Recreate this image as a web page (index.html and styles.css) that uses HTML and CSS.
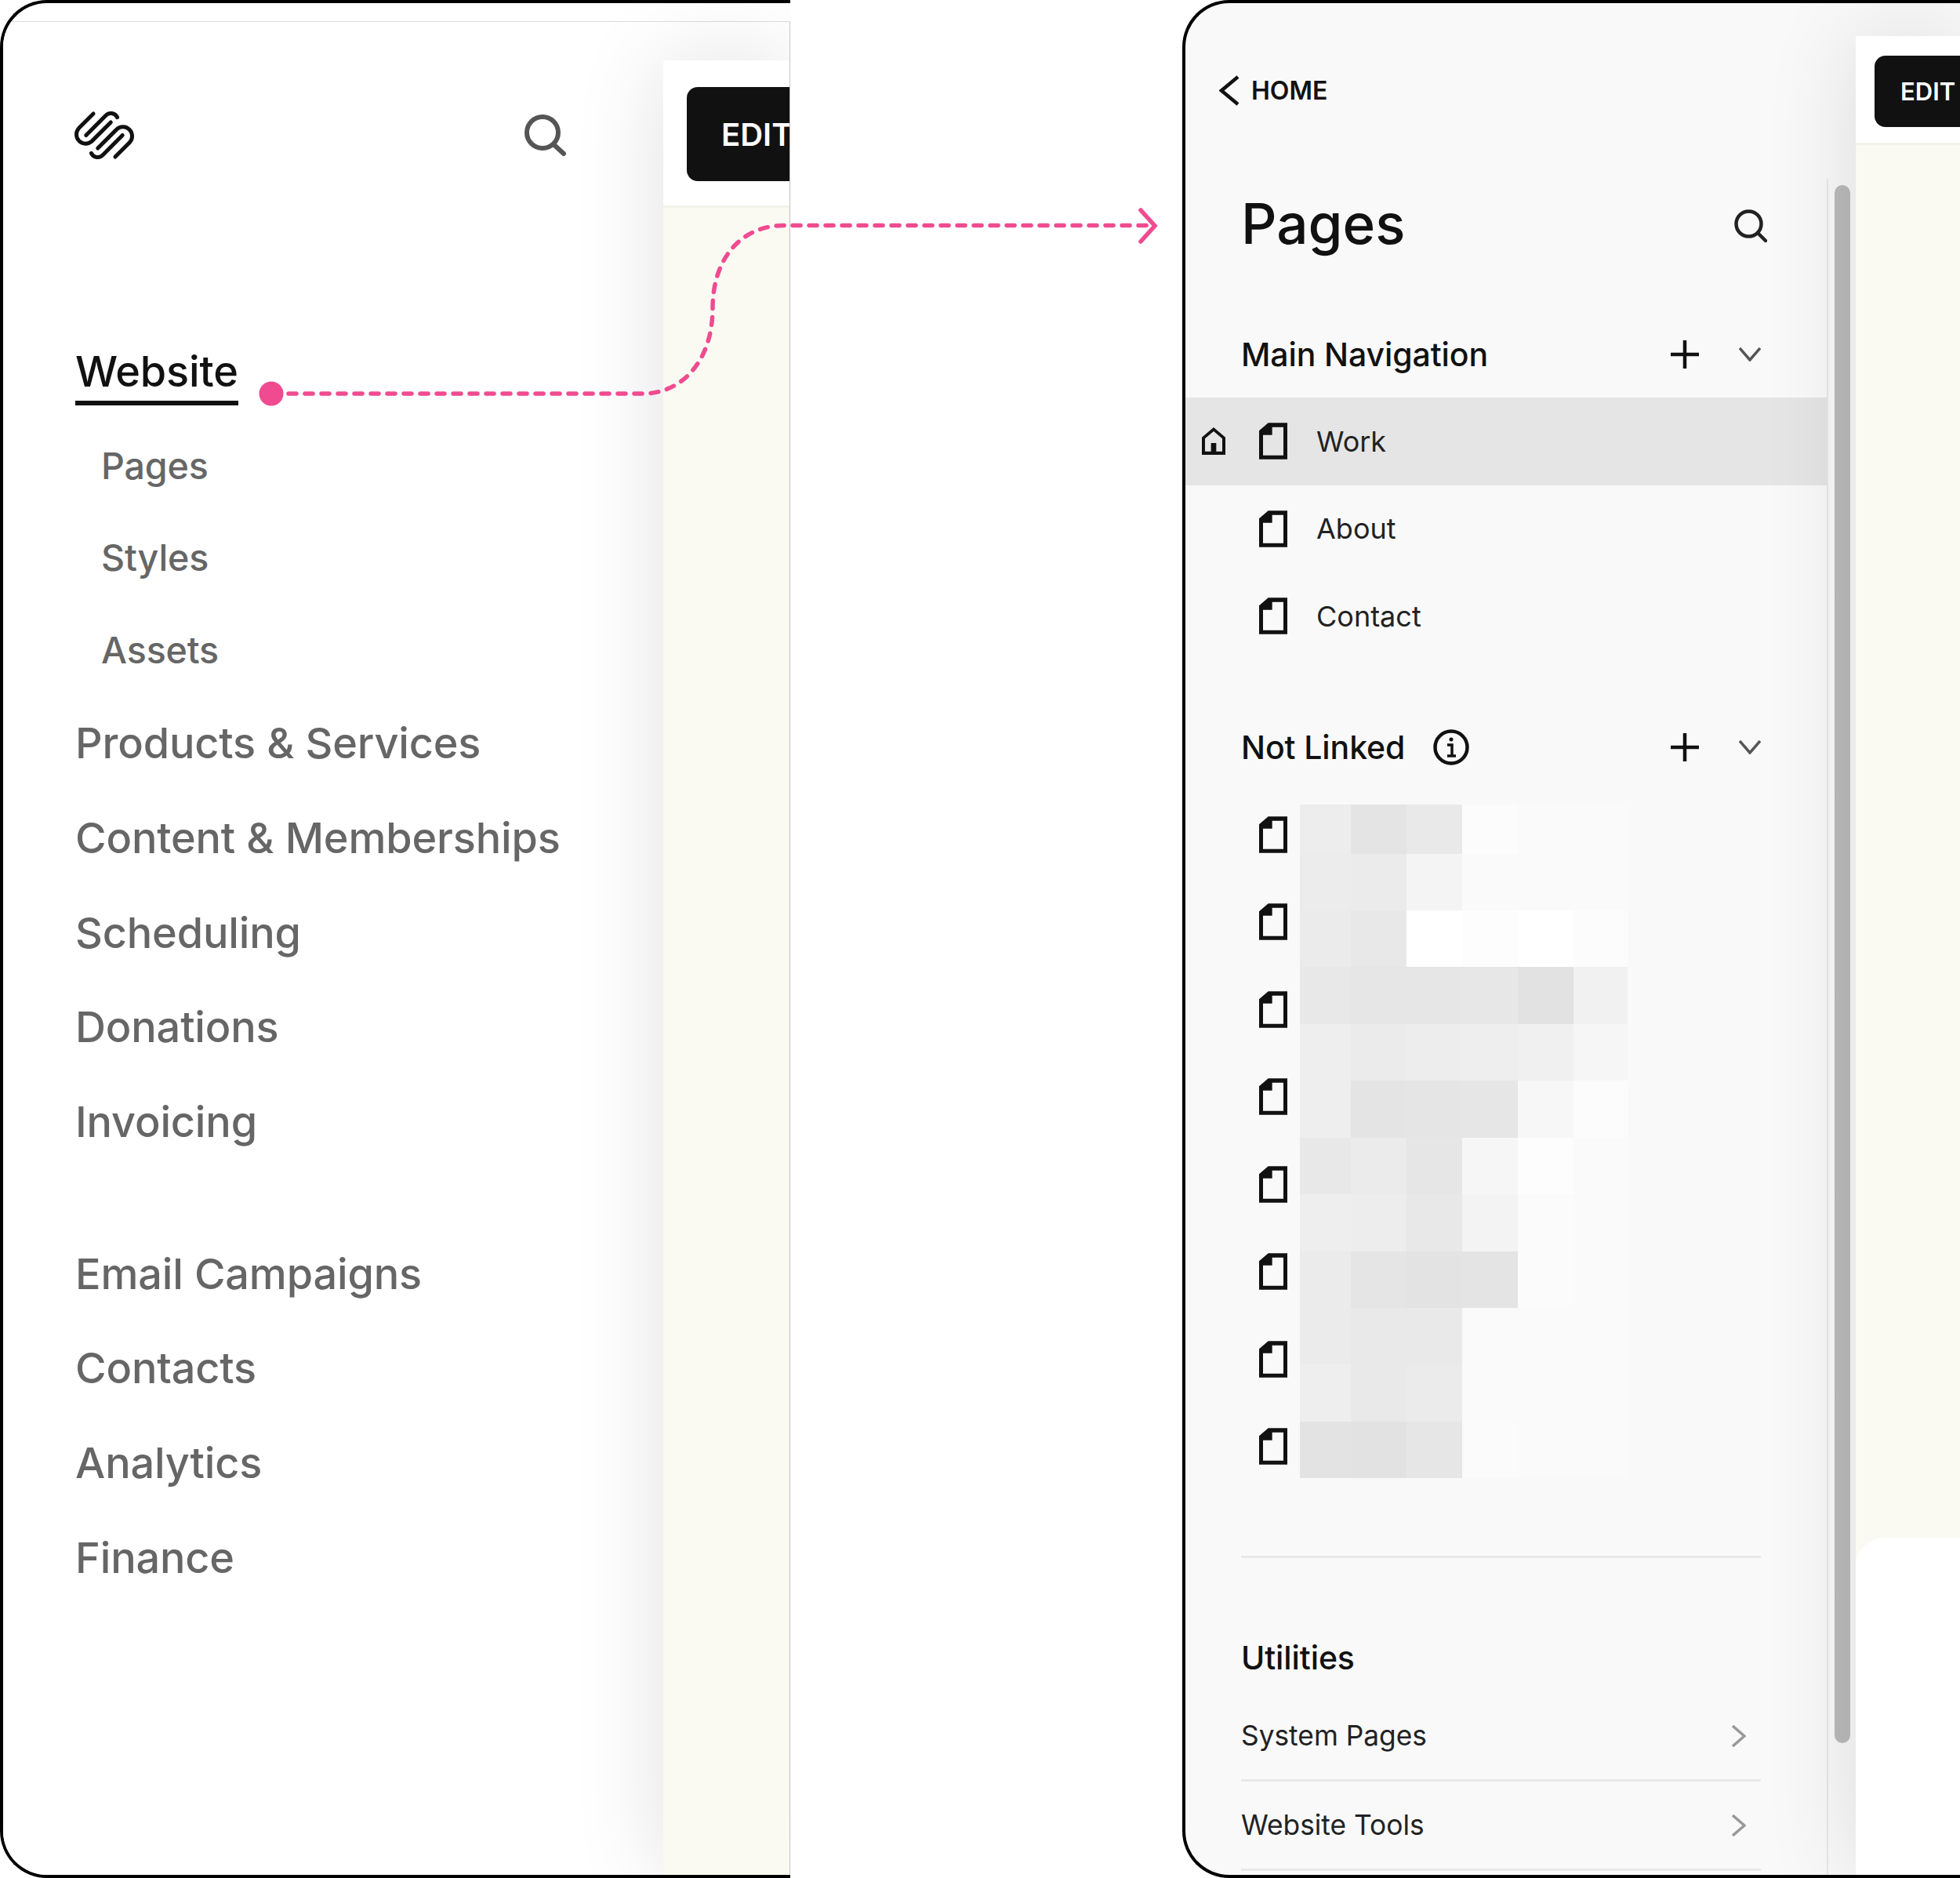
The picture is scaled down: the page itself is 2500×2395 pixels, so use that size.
FILE: index.html
```html
<!DOCTYPE html>
<html lang="en">

<head>
    <meta charset="UTF-8">
    <title>Website navigation and Pages panel</title>
    <link rel="stylesheet" href="styles.css">
</head>

<body>
    <div class="frame frame-home">
        <div class="window">
            <aside class="home-nav">
                <div class="home-top">
                    <svg class="logo" viewBox="100 90 240 190" fill="none" stroke="#111" stroke-width="15" stroke-linecap="round">
                        <g id="logo-half">
                            <path d="M178 102L122 158A35.4 35.4 0 0 0 172 208L245 135" />
                            <path d="M150 185L225 110A27 27 0 0 1 270 116" />
                        </g>
                        <use href="#logo-half" transform="rotate(180 220 185)" />
                    </svg>
                    <svg class="home-search" viewBox="0 0 53 53" fill="none" stroke="#555" stroke-width="6" stroke-linecap="round">
                        <circle cx="23" cy="23" r="20" />
                        <path d="M37 38L50 50" />
                    </svg>
                </div>

                <div class="nav-group">
                    <a class="nav-current">Website</a>
                    <a class="nav-sub">Pages</a>
                    <a class="nav-sub">Styles</a>
                    <a class="nav-sub">Assets</a>
                    <a class="nav-item">Products &amp; Services</a>
                    <a class="nav-item">Content &amp; Memberships</a>
                    <a class="nav-item">Scheduling</a>
                    <a class="nav-item">Donations</a>
                    <a class="nav-item">Invoicing</a>
                </div>

                <div class="nav-group nav-group-low">
                    <a class="nav-item">Email Campaigns</a>
                    <a class="nav-item">Contacts</a>
                    <a class="nav-item">Analytics</a>
                    <a class="nav-item">Finance</a>
                </div>
            </aside>

            <section class="preview preview-home">
                <div class="preview-bar">
                    <button class="edit-btn">EDIT</button>
                </div>
            </section>
        </div>
    </div>

    <div class="frame frame-pages">
        <aside class="pages-panel">
            <div class="back-row">
                <svg class="back-icon" viewBox="0 0 26 39" fill="none" stroke="#111" stroke-width="4.5">
                    <path d="M24 2L3 19.5L24 37" />
                </svg>
                <span>HOME</span>
            </div>

            <div class="title-row">
                <h1>Pages</h1>
                <svg class="title-search" viewBox="0 0 42 42" fill="none" stroke="#222" stroke-width="4.5" stroke-linecap="round">
                    <circle cx="18.5" cy="18.5" r="16" />
                    <path d="M30 30L40 40" />
                </svg>
            </div>

            <div class="section-head">
                <h2>Main Navigation</h2>
                <div class="section-actions">
                    <svg class="plus-icon" viewBox="0 0 36 36" stroke="#111" stroke-width="4.5"><path d="M18 0V36M0 18H36" /></svg>
                    <svg class="down-icon" viewBox="0 0 28 18" fill="none" stroke="#555" stroke-width="3.5"><path d="M1 1L14 16L27 1" /></svg>
                </div>
            </div>

            <ul class="page-list">
                <li class="page-row is-home">
                    <svg class="home-icon" viewBox="70 105 90 105"><path fill="#111" fill-rule="evenodd" d="M115 105L160 143V210H70V143ZM115 120L82 148V197H105V165H125V197H148V148Z" /></svg>
                    <svg class="page-icon" viewBox="290 88 108 140"><path fill="#111" fill-rule="evenodd" d="M325 88H398V228H290V118ZM340 105V135H305V213H383V105Z" /></svg>
                    <span>Work</span>
                </li>
                <li class="page-row">
                    <svg class="page-icon" viewBox="290 88 108 140"><path fill="#111" fill-rule="evenodd" d="M325 88H398V228H290V118ZM340 105V135H305V213H383V105Z" /></svg>
                    <span>About</span>
                </li>
                <li class="page-row">
                    <svg class="page-icon" viewBox="290 88 108 140"><path fill="#111" fill-rule="evenodd" d="M325 88H398V228H290V118ZM340 105V135H305V213H383V105Z" /></svg>
                    <span>Contact</span>
                </li>
            </ul>

            <div class="section-head section-unlinked">
                <div class="section-name">
                    <h2>Not Linked</h2>
                    <svg class="info-icon" viewBox="0 0 46 46" fill="none" stroke="#111" stroke-width="4.5">
                        <circle cx="23" cy="23" r="20.5" />
                        <path d="M18 20H24V34M18 34H29" stroke-width="3.5" />
                        <circle cx="23" cy="13" r="2.5" fill="#111" stroke="none" />
                    </svg>
                </div>
                <div class="section-actions">
                    <svg class="plus-icon" viewBox="0 0 36 36" stroke="#111" stroke-width="4.5"><path d="M18 0V36M0 18H36" /></svg>
                    <svg class="down-icon" viewBox="0 0 28 18" fill="none" stroke="#555" stroke-width="3.5"><path d="M1 1L14 16L27 1" /></svg>
                </div>
            </div>

            <div class="hidden-pages">
                <div class="hidden-icons">
                    <svg class="page-icon" viewBox="290 88 108 140"><path fill="#111" fill-rule="evenodd" d="M325 88H398V228H290V118ZM340 105V135H305V213H383V105Z" /></svg>
                    <svg class="page-icon" viewBox="290 88 108 140"><path fill="#111" fill-rule="evenodd" d="M325 88H398V228H290V118ZM340 105V135H305V213H383V105Z" /></svg>
                    <svg class="page-icon" viewBox="290 88 108 140"><path fill="#111" fill-rule="evenodd" d="M325 88H398V228H290V118ZM340 105V135H305V213H383V105Z" /></svg>
                    <svg class="page-icon" viewBox="290 88 108 140"><path fill="#111" fill-rule="evenodd" d="M325 88H398V228H290V118ZM340 105V135H305V213H383V105Z" /></svg>
                    <svg class="page-icon" viewBox="290 88 108 140"><path fill="#111" fill-rule="evenodd" d="M325 88H398V228H290V118ZM340 105V135H305V213H383V105Z" /></svg>
                    <svg class="page-icon" viewBox="290 88 108 140"><path fill="#111" fill-rule="evenodd" d="M325 88H398V228H290V118ZM340 105V135H305V213H383V105Z" /></svg>
                    <svg class="page-icon" viewBox="290 88 108 140"><path fill="#111" fill-rule="evenodd" d="M325 88H398V228H290V118ZM340 105V135H305V213H383V105Z" /></svg>
                    <svg class="page-icon" viewBox="290 88 108 140"><path fill="#111" fill-rule="evenodd" d="M325 88H398V228H290V118ZM340 105V135H305V213H383V105Z" /></svg>
                </div>
                <!-- pixelated page names -->
                <div class="mosaic">
                    <i class="g-ed"></i><i class="g-e4"></i><i class="g-e9"></i><i class="g-fc"></i><i></i><i></i>
                    <i class="g-ec"></i><i class="g-eb"></i><i class="g-f4"></i><i></i><i></i><i></i>
                    <i class="g-eb"></i><i class="g-e8"></i><i class="g-ff"></i><i class="g-fd"></i><i class="g-ff"></i><i class="g-fc"></i>
                    <i class="g-e8"></i><i class="g-e6"></i><i class="g-e6"></i><i class="g-e7"></i><i class="g-e2"></i><i class="g-f1"></i>
                    <i class="g-ee"></i><i class="g-eb"></i><i class="g-ed"></i><i class="g-ee"></i><i class="g-f0"></i><i class="g-f6"></i>
                    <i class="g-ee"></i><i class="g-e4"></i><i class="g-e5"></i><i class="g-e6"></i><i class="g-f7"></i><i class="g-fc"></i>
                    <i class="g-e8"></i><i class="g-eb"></i><i class="g-e6"></i><i class="g-f6"></i><i class="g-fd"></i><i></i>
                    <i class="g-ee"></i><i class="g-ed"></i><i class="g-e8"></i><i class="g-f3"></i><i class="g-fb"></i><i></i>
                    <i class="g-eb"></i><i class="g-e5"></i><i class="g-e3"></i><i class="g-e4"></i><i class="g-fb"></i><i></i>
                    <i class="g-eb"></i><i class="g-e9"></i><i class="g-e9"></i><i></i><i></i><i></i>
                    <i class="g-ee"></i><i class="g-e9"></i><i class="g-eb"></i><i></i><i></i><i></i>
                    <i class="g-e3"></i><i class="g-e2"></i><i class="g-e6"></i><i class="g-fb"></i><i></i><i></i>
                </div>
            </div>

            <div class="utilities">
                <h2>Utilities</h2>
                <div class="util-row">
                    <span>System Pages</span>
                    <svg class="next-icon" viewBox="0 0 18 28" fill="none" stroke="#999" stroke-width="3.5"><path d="M1 1L16 14L1 27" /></svg>
                </div>
                <div class="util-row">
                    <span>Website Tools</span>
                    <svg class="next-icon" viewBox="0 0 18 28" fill="none" stroke="#999" stroke-width="3.5"><path d="M1 1L16 14L1 27" /></svg>
                </div>
            </div>
        </aside>

        <div class="scroll-track">
            <div class="scroll-thumb"></div>
        </div>

        <section class="preview preview-pages">
            <div class="preview-bar">
                <button class="edit-btn">EDIT</button>
            </div>
            <div class="preview-body">
                <div class="preview-card"></div>
            </div>
        </section>
    </div>

    <!-- connector between the two frames -->
    <svg class="connector" viewBox="0 0 2500 2395" fill="none" stroke="#f04b90" stroke-width="5.5">
        <circle cx="346" cy="502" r="15.5" fill="#f04b90" stroke="none" />
        <path stroke-dasharray="10 11" stroke-linecap="round" d="M368 502H820C870 502 909 460 909 393C909 330 945 287.5 1000 287.5H1468" />
        <path stroke-linecap="round" d="M1455 268L1473 288L1455 308" />
    </svg>
</body>

</html>
```

FILE: styles.css
```css
* {
    box-sizing: border-box;
}

html,
body {
    margin: 0;
    padding: 0;
}

body {
    position: relative;
    width: 2500px;
    height: 2395px;
    display: flex;
    font-family: Inter, "Liberation Sans", sans-serif;
    background-color: #fff;
    color: #111;
    overflow: hidden;
}

svg {
    display: block;
    flex: none;
}

h1,
h2,
ul {
    margin: 0;
    padding: 0;
}

/* frames */
.frame {
    height: 2395px;
    border: 4px solid #000;
    border-right: none;
    border-radius: 60px 0 0 60px;
    overflow: hidden;
}

.frame-home {
    width: 1008px;
    margin-right: 500px;
    padding-top: 23px;
}

.frame-pages {
    width: 992px;
    display: flex;
    background-color: #f9f9f9;
}

.window {
    height: 100%;
    display: flex;
    border-top: 1px solid #ddd;
    border-right: 1px solid #ccc;
}

/* left frame nav */
.home-nav {
    width: 842px;
    padding: 112px 0 0 92px;
    background-color: #fff;
}

.home-top {
    width: 626px;
    height: 64px;
    display: flex;
    justify-content: space-between;
    align-items: center;
}

.logo {
    width: 80px;
    height: 63px;
    margin-left: -3px;
}

.home-search {
    width: 53px;
    height: 53px;
}

.nav-group {
    display: flex;
    flex-direction: column;
    align-items: flex-start;
    margin-top: 225px;
    font-size: 54px;
    font-weight: 550;
    letter-spacing: -0.15px;
    color: #666;
}

.nav-group-low {
    margin-top: 73px;
}

.nav-group a {
    display: flex;
    align-items: center;
}

.nav-current {
    height: 88px;
    margin-bottom: 18px;
    padding-top: 6px;
    border-bottom: 6px solid #111;
    color: #111;
}

.nav-sub {
    height: 117.5px;
    margin-left: 33px;
    font-size: 46.6px;
    font-weight: 500;
}

.nav-item {
    height: 120.7px;
}

/* preview areas */
.preview {
    flex: 1;
    min-width: 0;
    display: flex;
    flex-direction: column;
    overflow: hidden;
    background-color: #fafaf3;
    box-shadow: 0 0 120px rgba(0, 0, 0, 0.12);
    position: relative;
}

.preview-bar {
    display: flex;
    background-color: #fff;
    border-bottom: 3px solid #f3f3ea;
}

.preview-home {
    margin-top: 49px;
}

.preview-home .preview-bar {
    height: 188px;
    padding: 34px 0 0 30px;
}

.preview-pages {
    margin-top: 42px;
}

.preview-pages .preview-bar {
    height: 141px;
    padding: 25px 0 0 24px;
}

.edit-btn {
    flex: none;
    width: 300px;
    border: none;
    border-radius: 14px;
    background-color: #111;
    color: #fff;
    font-family: inherit;
    font-weight: 600;
    text-align: left;
}

.preview-home .edit-btn {
    height: 120px;
    padding-left: 44px;
    font-size: 40px;
}

.preview-pages .edit-btn {
    height: 91px;
    padding-left: 33px;
    font-size: 31px;
}

.preview-body {
    flex: 1;
    padding-top: 1776px;
}

.preview-card {
    height: 430px;
    background-color: #fff;
    border-top-left-radius: 36px;
}

/* pages panel */
.pages-panel {
    width: 818px;
    flex: none;
}

.back-row {
    height: 70px;
    margin: 76px 0 0 43px;
    display: flex;
    align-items: center;
    gap: 15px;
    font-size: 32px;
    font-weight: 600;
}

.back-icon {
    width: 26px;
    height: 39px;
}

.title-row {
    height: 90px;
    margin: 90px 76px 0 71px;
    display: flex;
    justify-content: space-between;
    align-items: center;
}

h1 {
    font-size: 71px;
    font-weight: 550;
}

.title-search {
    width: 42px;
    height: 42px;
    margin-top: 6px;
}

.section-head {
    height: 70px;
    margin: 87px 84px 20px 71px;
    display: flex;
    justify-content: space-between;
    align-items: center;
}

.section-unlinked {
    margin-top: 76px;
    margin-bottom: 38px;
}

h2 {
    font-size: 41px;
    font-weight: 550;
    letter-spacing: -0.1px;
}

.section-name {
    display: flex;
    align-items: center;
    gap: 36px;
}

.section-actions {
    display: flex;
    align-items: center;
    gap: 51px;
}

.plus-icon {
    width: 36px;
    height: 36px;
}

.down-icon {
    width: 28px;
    height: 18px;
}

.info-icon {
    width: 46px;
    height: 46px;
}

.page-list {
    list-style: none;
}

.page-row {
    height: 111.5px;
    padding-left: 94px;
    display: flex;
    align-items: center;
    gap: 37px;
    font-size: 36px;
    color: #222;
}

.page-row.is-home {
    padding-left: 21px;
    background-color: #e5e5e5;
}

.home-icon {
    width: 30px;
    height: 35px;
    margin-right: 6px;
}

.page-icon {
    width: 36px;
    height: 47px;
}

.hidden-pages {
    display: flex;
    padding-left: 94px;
    gap: 16px;
}

.hidden-icons {
    display: flex;
    flex-direction: column;
    gap: 64.5px;
    padding-top: 15px;
}

.mosaic {
    display: grid;
    grid-template-columns: 65px 71px 71px 71px 71px 69px;
    grid-template-rows: 63px repeat(11, 72.45px);
}

.mosaic i {
    background-color: #fafafa;
}

.mosaic .g-e2 { background-color: #e2e2e2; }
.mosaic .g-e3 { background-color: #e3e3e3; }
.mosaic .g-e4 { background-color: #e4e4e4; }
.mosaic .g-e5 { background-color: #e5e5e5; }
.mosaic .g-e6 { background-color: #e6e6e6; }
.mosaic .g-e7 { background-color: #e7e7e7; }
.mosaic .g-e8 { background-color: #e8e8e8; }
.mosaic .g-e9 { background-color: #e9e9e9; }
.mosaic .g-eb { background-color: #ebebeb; }
.mosaic .g-ec { background-color: #ececec; }
.mosaic .g-ed { background-color: #ededed; }
.mosaic .g-ee { background-color: #eeeeee; }
.mosaic .g-f0 { background-color: #f0f0f0; }
.mosaic .g-f1 { background-color: #f1f1f1; }
.mosaic .g-f3 { background-color: #f3f3f3; }
.mosaic .g-f4 { background-color: #f4f4f4; }
.mosaic .g-f6 { background-color: #f6f6f6; }
.mosaic .g-f7 { background-color: #f7f7f7; }
.mosaic .g-fb { background-color: #fbfbfb; }
.mosaic .g-fc { background-color: #fcfcfc; }
.mosaic .g-fd { background-color: #fdfdfd; }
.mosaic .g-ff { background-color: #ffffff; }

.utilities {
    margin: 99px 84px 0 71px;
    padding-top: 97px;
    border-top: 3px solid #e8e8e8;
}

.utilities h2 {
    height: 60px;
    line-height: 60px;
    margin-bottom: 14px;
}

.util-row {
    height: 114px;
    padding-right: 19px;
    display: flex;
    justify-content: space-between;
    align-items: center;
    border-bottom: 3px solid #e8e8e8;
    font-size: 35.3px;
    color: #222;
}

.next-icon {
    width: 18px;
    height: 28px;
}

/* scrollbar */
.scroll-track {
    width: 37px;
    flex: none;
    margin-top: 224px;
    padding: 8px 0 0 8px;
    border-left: 2px solid #e8e8e8;
}

.scroll-thumb {
    width: 20px;
    height: 1987px;
    border-radius: 10px;
    background-color: #bbb;
}

/* connector overlay */
.connector {
    position: absolute;
    left: 0;
    top: 0;
    width: 2500px;
    height: 2395px;
    pointer-events: none;
}
```
